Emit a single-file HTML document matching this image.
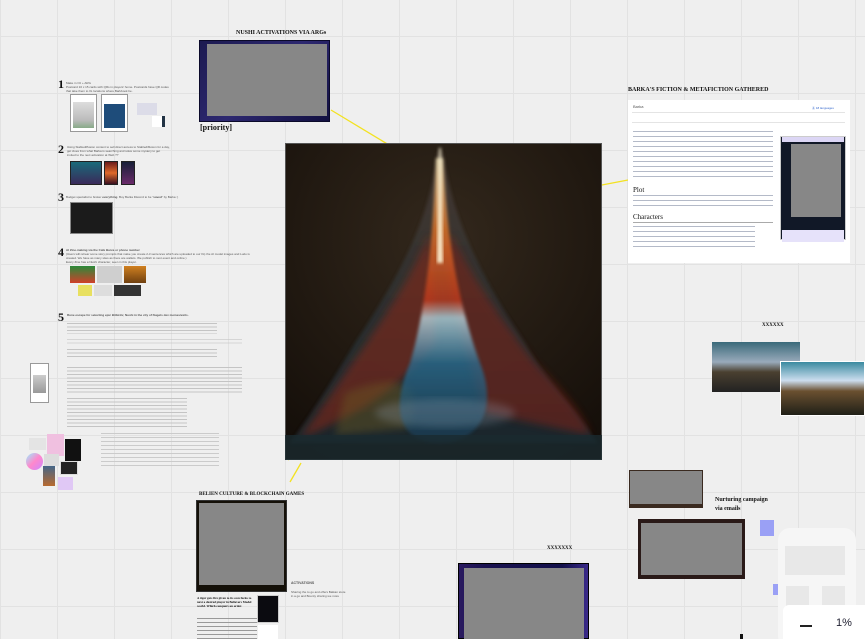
<!DOCTYPE html>
<html><head><meta charset="utf-8">
<style>
*{margin:0;padding:0;box-sizing:border-box}
html,body{width:865px;height:639px;overflow:hidden}
body{position:relative;background-color:#efefef;
background-image:linear-gradient(to right,#e2e2e2 1px,transparent 1px),linear-gradient(to bottom,#e2e2e2 1px,transparent 1px);
background-size:57px 57px;background-position:0 36px;font-family:"Liberation Serif",serif;color:#111}
.a{position:absolute}
.h{position:absolute;font-weight:bold;font-size:6px;letter-spacing:0;white-space:nowrap;font-family:"Liberation Serif",serif}
.n{position:absolute;font-weight:bold;font-size:12px;font-family:"Liberation Serif",serif}
.t{position:absolute;font-size:3px;line-height:4px;color:#555;font-family:"Liberation Sans",sans-serif;white-space:nowrap}
.gl{position:absolute;height:1px;background:#b9b9b9}
.gray{position:absolute;background:#878787}
.th{position:absolute;border:1px solid #999;background:#fff}
.ln{position:absolute;background:repeating-linear-gradient(to bottom,#c4c4c4 0 1px,transparent 1px 3.5px)}
</style></head><body>

<svg class="a" style="left:0;top:0" width="865" height="639">
<line x1="331" y1="110" x2="437" y2="174" stroke="#f3e221" stroke-width="1.3"/>
<line x1="628" y1="180" x2="482" y2="208" stroke="#f3e221" stroke-width="1.3"/>
<line x1="443" y1="290" x2="288" y2="460" stroke="#f3e221" stroke-width="1.3"/>
<line x1="301" y1="463" x2="290" y2="482" stroke="#f3e221" stroke-width="1.3"/>
</svg>

<div class="h" style="left:236px;top:30px">NUSHI ACTIVATIONS VIA ARGs</div>
<div class="a" style="left:199px;top:40px;width:131px;height:82px;background:linear-gradient(135deg,#1c1a50,#2d2870 50%,#121040);border:1px solid #0b0a2a"></div>
<div class="gray" style="left:207px;top:44px;width:120px;height:72px"></div>
<div class="a" style="left:200px;top:123px;font-size:8px;font-weight:bold">[priority]</div>

<svg class="a" style="left:285px;top:143px" width="317" height="317" viewBox="0 0 317 317">
<defs>
<radialGradient id="bg" cx="0.5" cy="0.3" r="0.8"><stop offset="0" stop-color="#33281c"/><stop offset="1" stop-color="#140e09"/></radialGradient>
<linearGradient id="mt" x1="0" y1="0" x2="0" y2="1"><stop offset="0" stop-color="#4a3c34"/><stop offset="0.6" stop-color="#2a3236"/><stop offset="1" stop-color="#1c2a32"/></linearGradient>
<linearGradient id="core" x1="0" y1="0" x2="0" y2="1"><stop offset="0" stop-color="#fff2c0"/><stop offset="0.25" stop-color="#ee7a28"/><stop offset="0.5" stop-color="#c83a1a"/><stop offset="0.56" stop-color="#bfe0ea"/><stop offset="0.72" stop-color="#2a6f94"/><stop offset="1" stop-color="#1a3a50"/></linearGradient>
<filter id="b"><feGaussianBlur stdDeviation="4"/></filter>
<filter id="b2"><feGaussianBlur stdDeviation="1.5"/></filter>
</defs>
<rect width="317" height="317" fill="url(#bg)" stroke="#555" stroke-width="2"/>
<path d="M152 10 C145 80 110 140 70 200 C40 250 20 280 5 300 L312 300 C295 270 262 240 240 200 C200 140 168 80 158 10 Z" fill="url(#mt)" opacity="0.85" filter="url(#b2)"/>
<path d="M40 260 C80 200 120 150 145 90 L150 200 C120 240 80 270 15 295 Z" fill="#8a2518" opacity="0.55" filter="url(#b)"/>
<path d="M165 90 C190 140 220 180 250 220 C280 250 300 275 305 292 L200 270 C180 210 170 160 160 110 Z" fill="#7e2216" opacity="0.55" filter="url(#b)"/>
<path d="M60 250 C110 230 140 235 125 285 L50 292 Z" fill="#6a5820" opacity="0.45" filter="url(#b)"/>
<path d="M151 15 L158 15 C162 90 170 150 195 220 C215 270 190 300 155 300 C125 300 100 280 125 220 C140 170 148 100 151 15 Z" fill="url(#core)" opacity="0.75" filter="url(#b2)"/>
<path d="M154 5 L156 5 L158 120 L152 120 Z" fill="#fff6d8" opacity="0.9" filter="url(#b2)"/>
<rect x="0" y="292" width="317" height="25" fill="#1a2a30" opacity="0.8"/>
<path d="M10 300 L310 300" stroke="#e8d8b0" stroke-width="2" opacity="0.5" filter="url(#b2)"/>
<ellipse cx="160" cy="270" rx="70" ry="14" fill="#9ab" opacity="0.25" filter="url(#b)"/>
</svg>

<div class="h" style="left:628px;top:87px">BARKA'S FICTION &amp; METAFICTION GATHERED</div>
<div class="a" style="left:628px;top:100px;width:222px;height:163px;background:#fff"></div>
<div class="t" style="left:633px;top:105px;font-size:4px">Barka</div>
<div class="t" style="left:812px;top:106px;color:#36c">Ⓐ 18 languages</div>
<div class="gl" style="left:632px;top:112px;width:213px;background:#e4e4e4"></div>
<div class="gl" style="left:632px;top:122px;width:213px;background:#e4e4e4"></div>
<div class="a" style="left:633px;top:131px;width:140px;height:50px;background:repeating-linear-gradient(to bottom,#b4bac8 0 1px,transparent 1px 5px)"></div>
<div class="a" style="left:633px;top:186px;font-size:7px">Plot</div>
<div class="a" style="left:633px;top:195px;width:140px;height:14px;background:repeating-linear-gradient(to bottom,#b4bac8 0 1px,transparent 1px 5px)"></div>
<div class="a" style="left:633px;top:213px;font-size:7px">Characters</div>
<div class="gl" style="left:633px;top:222px;width:140px;background:#aaa"></div>
<div class="a" style="left:633px;top:226px;width:122px;height:24px;background:repeating-linear-gradient(to bottom,#b4bac8 0 1px,transparent 1px 5px)"></div>
<div class="a" style="left:780px;top:136px;width:66px;height:104px;background:#111827;border:1px solid #ccc"></div>
<div class="a" style="left:782px;top:137px;width:62px;height:5px;background:#dcd6f5"></div>
<div class="gray" style="left:791px;top:144px;width:50px;height:73px"></div>
<div class="a" style="left:782px;top:230px;width:62px;height:12px;background:#e6e2fa"></div>

<div class="n" style="left:58px;top:77px">1</div>
<div class="t" style="left:66px;top:81px">Make in Oz + ARG<br>Postcard 10 x 15 cards with QRs in players' home. Postcards have QR codes<br>that take them to IG locations where Barkbook be.</div>
<div class="th" style="left:70px;top:94px;width:27px;height:38px"></div>
<div class="a" style="left:73px;top:102px;width:21px;height:26px;background:linear-gradient(#ddd,#bbb 70%,#8a8)"></div>
<div class="th" style="left:101px;top:94px;width:27px;height:38px"></div>
<div class="a" style="left:104px;top:104px;width:21px;height:24px;background:#1e4c7a"></div>
<div class="a" style="left:137px;top:103px;width:20px;height:12px;background:#dcdce8"></div>
<div class="a" style="left:152px;top:116px;width:13px;height:11px;background:#fff;border-right:3px solid #234"></div>

<div class="n" style="left:58px;top:142px">2</div>
<div class="t" style="left:67px;top:145px">Using Stablediffusion content to sell direct access to Stablediffusion for a day,<br>get clues from what Barka is searching and solve some mystery to get<br>invited to the next activation at Web ??</div>
<div class="a" style="left:70px;top:161px;width:32px;height:24px;background:linear-gradient(#1a6a7a,#3a2a5a);border:1px solid #222"></div>
<div class="a" style="left:104px;top:161px;width:14px;height:24px;background:linear-gradient(#6a1a1a,#e06a2a,#3a1020);border:1px solid #222"></div>
<div class="a" style="left:121px;top:161px;width:14px;height:24px;background:linear-gradient(#182038,#6a2a6a);border:1px solid #222"></div>

<div class="n" style="left:58px;top:190px">3</div>
<div class="t" style="left:66px;top:195px">Budget specialist to broker <b>everything</b>. Buy Barka Discord to be "<b>saved</b>" by Barka :)</div>
<div class="a" style="left:70px;top:202px;width:43px;height:32px;background:#1b1b1b;border:1px solid #888"></div>

<div class="n" style="left:58px;top:245px">4</div>
<div class="t" style="left:66px;top:248px"><b>AI Zine-making via the Cafe Barca or phone number</b><br>(Users will rehear some story prompts that make you create 2-3 sentences which are uploaded to our IG) the AI model images and Ludo is<br>created. We have as many sites as there are wallets. We publish to next event and online.)<br>Every Zine has a Nushi character, seen in this player.</div>
<div class="a" style="left:70px;top:266px;width:25px;height:17px;background:linear-gradient(#2a8a3a,#d0402a)"></div>
<div class="a" style="left:97px;top:266px;width:25px;height:17px;background:#cfcfcf"></div>
<div class="a" style="left:124px;top:266px;width:22px;height:17px;background:linear-gradient(#d08020,#704010)"></div>
<div class="a" style="left:78px;top:285px;width:14px;height:11px;background:#e8e060"></div>
<div class="a" style="left:94px;top:285px;width:18px;height:11px;background:#ddd"></div>
<div class="a" style="left:114px;top:285px;width:27px;height:11px;background:#333"></div>

<div class="n" style="left:58px;top:310px">5</div>
<div class="t" style="left:67px;top:313px;font-weight:bold">Rune escape for selecting epic Bitbirds; Nushi in the city of Nugets dev memes/exits.</div>
<div class="ln" style="left:67px;top:323px;width:150px;height:11px"></div>
<div class="ln" style="left:67px;top:339px;width:175px;height:7px;opacity:.6"></div>
<div class="ln" style="left:67px;top:349px;width:150px;height:10px"></div>
<div class="ln" style="left:67px;top:367px;width:175px;height:28px"></div>
<div class="ln" style="left:67px;top:398px;width:120px;height:30px"></div>
<div class="th" style="left:30px;top:363px;width:19px;height:40px"></div>
<div class="a" style="left:33px;top:375px;width:13px;height:18px;background:linear-gradient(#ccc,#999)"></div>
<div class="a" style="left:101px;top:433px;width:118px;height:36px;background:repeating-linear-gradient(to bottom,#cbcbcb 0 1px,transparent 1px 4px)"></div>

<div class="a" style="left:29px;top:438px;width:17px;height:12px;background:#e4e4e4"></div>
<div class="a" style="left:47px;top:434px;width:17px;height:22px;background:#f0c0e0"></div>
<div class="a" style="left:65px;top:439px;width:16px;height:22px;background:#111"></div>
<div class="a" style="left:26px;top:453px;width:17px;height:17px;border-radius:50%;background:linear-gradient(135deg,#9ef,#f8c,#c8f)"></div>
<div class="a" style="left:44px;top:454px;width:15px;height:12px;background:#ddd"></div>
<div class="a" style="left:60px;top:461px;width:18px;height:14px;background:#222;border:1px solid #ddd"></div>
<div class="a" style="left:43px;top:466px;width:12px;height:20px;background:linear-gradient(#468,#b86a30)"></div>
<div class="a" style="left:58px;top:477px;width:15px;height:13px;background:#e0c8f5"></div>

<div class="h" style="left:199px;top:492px;font-size:5px">BELIEN CULTURE &amp; BLOCKCHAIN GAMES</div>
<div class="a" style="left:196px;top:500px;width:91px;height:92px;background:#141008;border:1px solid #333"></div>
<div class="gray" style="left:199px;top:503px;width:85px;height:82px"></div>
<div class="a" style="left:197px;top:596px;width:60px;font-size:3.2px;line-height:4px;font-weight:bold">A tiger gets fire given to its own fucks to next a desired player in Believers Model world. Which conquers an order.</div>
<div class="a" style="left:197px;top:618px;width:60px;height:21px;background:repeating-linear-gradient(to bottom,#999 0 1px,transparent 1px 4px)"></div>
<div class="a" style="left:257px;top:595px;width:22px;height:28px;background:#0b0b10;border:1px solid #ccc"></div>
<div class="a" style="left:258px;top:625px;width:20px;height:14px;background:#fff"></div>
<div class="t" style="left:291px;top:581px;font-weight:bold;font-size:3.5px">ACTIVATIONS</div>
<div class="t" style="left:291px;top:590px">Sharing the to go and offers Balkan store<br>in a go and Bounty sharing we more</div>

<div class="h" style="left:547px;top:546px;font-size:5px">XXXXXXX</div>
<div class="a" style="left:458px;top:563px;width:131px;height:76px;background:linear-gradient(90deg,#2a1a60,#1a1250 20%,#12104a 80%,#3a2a8a);border:1px solid #000"></div>
<div class="gray" style="left:464px;top:568px;width:120px;height:71px"></div>

<div class="h" style="left:762px;top:323px;font-size:5px">XXXXXX</div>
<div class="a" style="left:712px;top:342px;width:88px;height:50px;background:linear-gradient(#3a6a7a,#9ab 40%,#4a4030 60%,#222)"></div>
<div class="a" style="left:780px;top:361px;width:85px;height:55px;background:linear-gradient(#3a8aa0,#cde 35%,#6a5030 55%,#202018);border:1px solid #fff"></div>
<div class="a" style="left:629px;top:470px;width:74px;height:38px;background:#3a2a20"></div>
<div class="gray" style="left:630px;top:471px;width:72px;height:33px"></div>
<div class="a" style="left:715px;top:496px;font-size:6px;font-weight:bold;line-height:9px">Nurturing campaign<br>via emails</div>
<div class="a" style="left:638px;top:519px;width:107px;height:60px;background:#2a1a18"></div>
<div class="gray" style="left:641px;top:523px;width:101px;height:52px"></div>
<div class="a" style="left:760px;top:520px;width:14px;height:16px;background:#9aa0f5"></div>
<div class="a" style="left:773px;top:584px;width:9px;height:11px;background:#9aa0f5"></div>
<div class="a" style="left:778px;top:528px;width:78px;height:120px;background:#f6f6f6;border-radius:12px"></div>
<div class="a" style="left:785px;top:546px;width:60px;height:29px;background:#e8e8e8"></div>
<div class="a" style="left:786px;top:586px;width:23px;height:20px;background:#e8e8e8"></div>
<div class="a" style="left:822px;top:586px;width:23px;height:20px;background:#e8e8e8"></div>
<div class="a" style="left:783px;top:605px;width:82px;height:34px;background:#fff;border-radius:6px 0 0 0"></div>
<div class="a" style="left:800px;top:625px;width:12px;height:2px;background:#222"></div>
<div class="a" style="left:836px;top:617px;font-family:'Liberation Sans',sans-serif;font-size:11px;color:#223">1%</div>
<div class="a" style="left:740px;top:634px;width:3px;height:5px;background:#111"></div>
</body></html>
